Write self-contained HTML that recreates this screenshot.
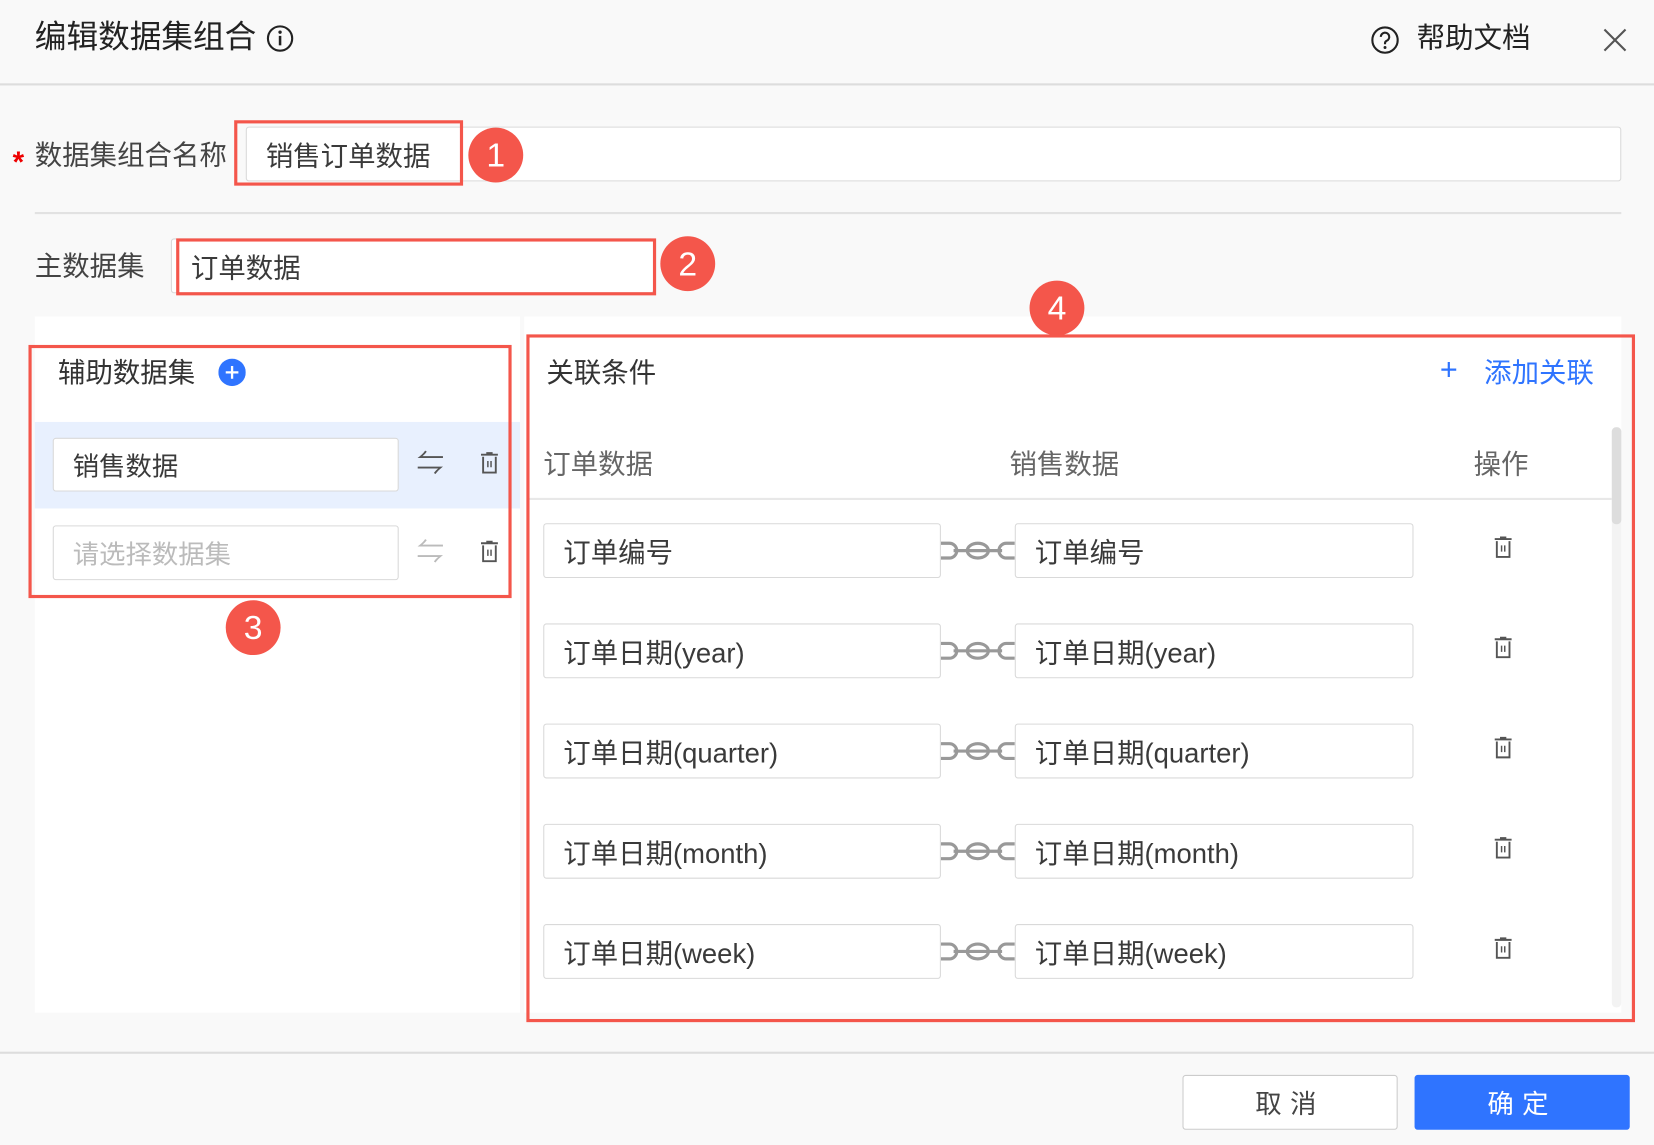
<!DOCTYPE html>
<html><head><meta charset="utf-8"><style>
*{box-sizing:border-box;margin:0;padding:0}
html,body{width:1654px;height:1144px;overflow:hidden;background:#f9f9f9}
#w{position:absolute;left:0;top:0;width:1568px;height:1085px;transform:scale(1.05485);transform-origin:0 0;font-family:"Liberation Sans","Noto Sans CJK SC",sans-serif;color:#333}
.a{position:absolute}
.t{position:absolute;white-space:nowrap;line-height:1}
.inp{position:absolute;background:#fff;border:1px solid #d9d9d9;border-radius:3px;font-size:25px;color:#3a3a3a;padding-left:18px;display:flex;align-items:center;white-space:nowrap}
.red{position:absolute;border:3px solid #f4564b}
.badge{position:absolute;width:52px;height:52px;border-radius:50%;background:#f4564b;color:#fff;font-size:32px;display:flex;align-items:center;justify-content:center}
.trash{position:absolute;width:20px;height:22px}
</style></head><body><div id="w">
<div class="a" style="left:0;top:79px;width:1568px;height:2px;background:#ddd"></div>
<div class="t" style="left:33px;top:21px;font-size:30px;color:#222">编辑数据集组合</div>
<svg class="a" style="left:252px;top:23px" width="27" height="27" viewBox="0 0 27 27"><circle cx="13.5" cy="13.5" r="11.5" fill="none" stroke="#222" stroke-width="2"/><rect x="12.3" y="11" width="2.4" height="9" fill="#222"/><circle cx="13.5" cy="7.5" r="1.6" fill="#222"/></svg>
<svg class="a" style="left:1299px;top:24px" width="28" height="28" viewBox="0 0 28 28"><circle cx="14" cy="14" r="12" fill="none" stroke="#222" stroke-width="2"/><path d="M10 11a4 4 0 1 1 5.5 3.7c-1 .5-1.5 1.2-1.5 2.3v1" fill="none" stroke="#222" stroke-width="2"/><circle cx="14" cy="21" r="1.4" fill="#222"/></svg>
<div class="t" style="left:1343px;top:23px;font-size:27px;color:#222">帮助文档</div>
<svg class="a" style="left:1519px;top:26px" width="24" height="24" viewBox="0 0 24 24"><path d="M2 2L22 22M22 2L2 22" stroke="#555" stroke-width="2"/></svg>

<div class="t" style="left:12px;top:140px;font-size:28px;font-weight:bold;color:#e00">*</div>
<div class="t" style="left:33px;top:134px;font-size:26px;color:#444">数据集组合名称</div>
<div class="inp" style="left:233px;top:120px;width:1304px;height:52px;font-size:26px">销售订单数据</div>
<div class="red" style="left:222px;top:114px;width:217px;height:62px"></div>
<div class="badge" style="left:444px;top:121px">1</div>
<div class="a" style="left:33px;top:201px;width:1504px;height:2px;background:#e2e2e2"></div>

<div class="t" style="left:33px;top:239px;font-size:26px;color:#444">主数据集</div>
<div class="inp" style="left:162px;top:226px;width:458px;height:52px;padding-left:18px;font-size:26px">订单数据</div>
<div class="red" style="left:167px;top:226px;width:455px;height:54px"></div>
<div class="badge" style="left:626px;top:224px">2</div>

<div class="a" style="left:33px;top:300px;width:460px;height:660px;background:#fff"></div>
<div class="a" style="left:497px;top:300px;width:1040px;height:660px;background:#fff"></div>
<div class="t" style="left:55px;top:340px;font-size:26px;color:#333">辅助数据集</div>
<svg class="a" style="left:207px;top:340px" width="26" height="26" viewBox="0 0 26 26"><circle cx="13" cy="13" r="13" fill="#2f74ff"/><path d="M13 7v12M7 13h12" stroke="#fff" stroke-width="2.2"/></svg>
<div class="a" style="left:33px;top:400px;width:460px;height:82px;background:#e8f0fe"></div>
<div class="inp" style="left:50px;top:415px;width:328px;height:51px">销售数据</div>
<div class="t" style="left:395px;top:426px;font-size:26px;color:#555">⇋</div>
<svg class="trash" style="left:454px;top:428px" viewBox="0 0 20 22"><path d="M2 3h16M7 1.5h6M4 5v15h12V5" fill="none" stroke="#555" stroke-width="1.8"/><path d="M8.5 9v6M11.5 9v6" stroke="#555" stroke-width="1.4"/></svg>
<div class="inp" style="left:50px;top:498px;width:328px;height:52px;color:#bbb">请选择数据集</div>
<div class="t" style="left:395px;top:510px;font-size:26px;color:#bbb">⇋</div>
<svg class="trash" style="left:454px;top:512px" viewBox="0 0 20 22"><path d="M2 3h16M7 1.5h6M4 5v15h12V5" fill="none" stroke="#555" stroke-width="1.8"/><path d="M8.5 9v6M11.5 9v6" stroke="#555" stroke-width="1.4"/></svg>
<div class="red" style="left:27px;top:327px;width:458px;height:240px"></div>
<div class="badge" style="left:214px;top:569px">3</div>

<div class="t" style="left:518px;top:340px;font-size:26px;color:#333">关联条件</div>
<div class="t" style="left:1365px;top:337px;font-size:29px;color:#2f74ff">+</div>
<div class="t" style="left:1407px;top:340px;font-size:26px;color:#2f74ff">添加关联</div>
<div class="t" style="left:515px;top:427px;font-size:26px;color:#666">订单数据</div>
<div class="t" style="left:957px;top:427px;font-size:26px;color:#666">销售数据</div>
<div class="t" style="left:1397px;top:427px;font-size:26px;color:#666">操作</div>
<div class="a" style="left:500px;top:472px;width:1028px;height:2px;background:#e8e8e8"></div>
<div class="a" style="left:1528px;top:405px;width:9px;height:550px;background:#f3f3f3;border-radius:4px"></div>
<div class="a" style="left:1528px;top:405px;width:9px;height:92px;background:#ddd;border-radius:4px"></div>

<div id="rows"></div>
<div class="red" style="left:499px;top:317px;width:1051px;height:652px"></div>
<div class="badge" style="left:976px;top:266px">4</div>

<div class="a" style="left:0;top:997px;width:1568px;height:2px;background:#ddd"></div>
<div class="a" style="left:1121px;top:1019px;width:204px;height:52px;background:#fff;border:1px solid #ccc;border-radius:3px;font-size:25px;color:#444;display:flex;align-items:center;justify-content:center;letter-spacing:8px">取消</div>
<div class="a" style="left:1341px;top:1019px;width:204px;height:52px;background:#2f74ff;border-radius:3px;font-size:25px;color:#fff;display:flex;align-items:center;justify-content:center;letter-spacing:8px">确定</div>
</div>
<script>
var names=["订单编号","订单日期(year)","订单日期(quarter)","订单日期(month)","订单日期(week)"];
var h="";
names.forEach(function(n,i){var t=496+i*95;
h+='<div class="inp" style="left:515px;top:'+t+'px;width:377px;height:52px;font-size:26px">'+n+'</div>';
h+='<div class="inp" style="left:962px;top:'+t+'px;width:378px;height:52px;font-size:26px">'+n+'</div>';
h+='<svg class="a" style="left:892px;top:'+(t+14)+'px" width="70" height="24" viewBox="0 0 70 24"><g fill="none" stroke="#999" stroke-width="3"><path d="M0 5h8a7 7 0 0 1 0 14H0"/><ellipse cx="35" cy="12" rx="10" ry="7"/><path d="M70 5h-8a7 7 0 0 0 0 14h8"/><path d="M12 12h46"/></g></svg>';
h+='<svg class="trash" style="left:1415px;top:'+(t+12)+'px" viewBox="0 0 20 22"><path d="M2 3h16M7 1.5h6M4 5v15h12V5" fill="none" stroke="#555" stroke-width="1.8"/><path d="M8.5 9v6M11.5 9v6" stroke="#555" stroke-width="1.4"/></svg>';});
document.getElementById("rows").outerHTML=h;
</script>
</body></html>
